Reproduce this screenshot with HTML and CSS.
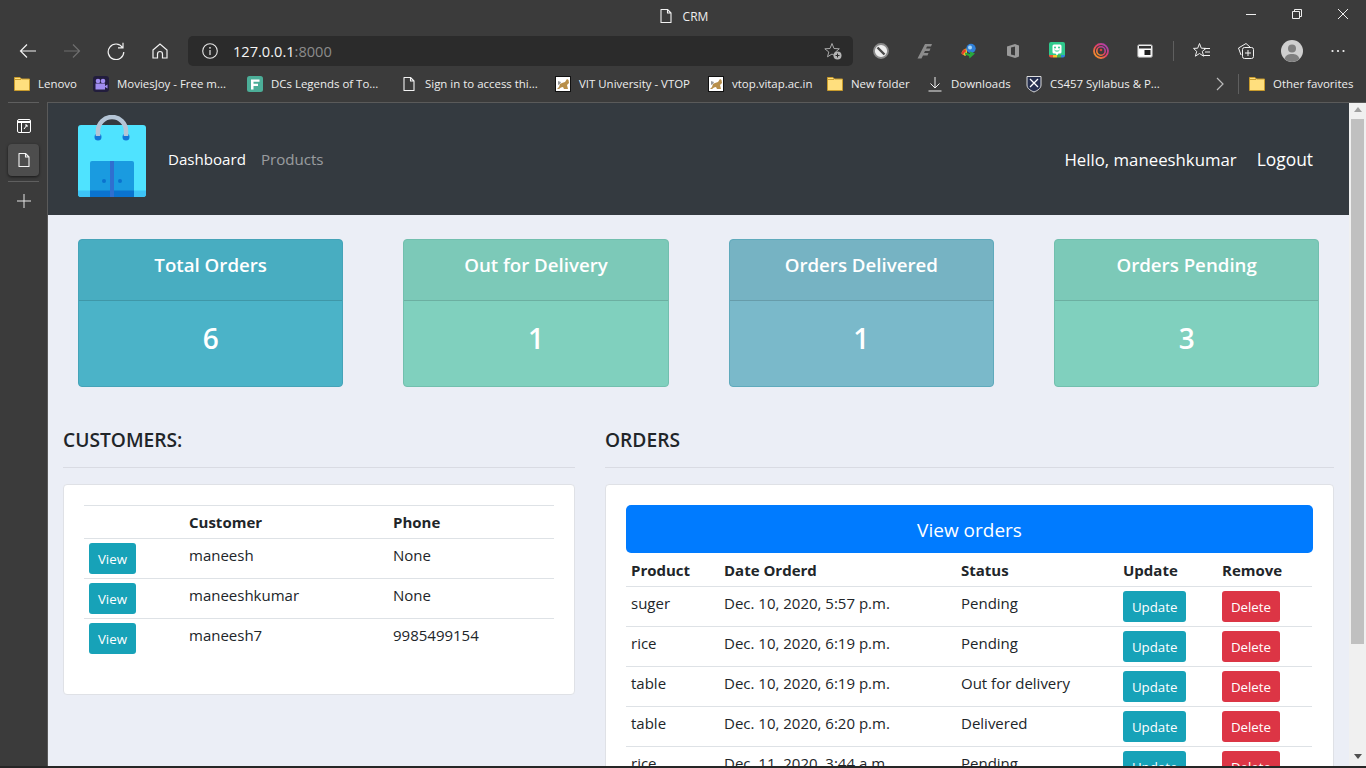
FILE: index.html
```html
<!DOCTYPE html>
<html lang="en">
<head>
    <meta charset="UTF-8" />
    <meta name="viewport" content="width=device-width, initial-scale=1.0" />
    <title>CRM</title>
    <link rel="stylesheet" href="styles.css">
</head>
<body>
    <svg class="defs" width="0" height="0">
        <symbol id="doc" viewBox="0 0 16 16"><path d="M3 1.500h6.500L13 5v9.500H3z M9.500 1.500V5H13" fill="none" stroke="currentColor" stroke-width="1.100" stroke-linejoin="round"/></symbol>
        <symbol id="folder" viewBox="0 0 16 16"><path d="M.5 1.500h5.500l1.500 1.500h8v11.500h-15z" fill="#ffdf7e" stroke="#c89b2c"/><path d="M1 3.500h6" stroke="#c89b2c"/></symbol>
        <symbol id="cat" viewBox="0 0 16 16"><rect x=".5" y=".5" width="15" height="15" fill="#fff" stroke="#111"/><path d="M2 13l2-2 1-3 2-1 3-1 2-3 1.500 1 .5 3-2 2 1 4H9L8 11l-2 .5-2 1.500z" fill="#b88f4a"/><path d="M3 5l3 1-1 2-2 1z" fill="#999"/></symbol>
        <linearGradient id="ring" x1="1" y1="0" x2="0" y2="1"><stop offset="0" stop-color="#9c3fc0"/><stop offset=".5" stop-color="#e8405f"/><stop offset="1" stop-color="#f9a81c"/></linearGradient>
    </svg>

    <div class="titlebar">
        <span></span>
        <div class="title">
            <svg class="ico16" width="16" height="16"><use href="#doc"/></svg>
            <span>CRM</span>
        </div>
        <div class="winctl">
            <svg width="46" height="16" viewBox="0 0 46 16"><path d="M18 8.500h10" stroke="#eee"/></svg>
            <svg width="46" height="16" viewBox="0 0 46 16"><path d="M18.500 5.500h7v7h-7z M20.500 5.500v-2h7v7h-2" fill="none" stroke="#eee"/></svg>
            <svg width="46" height="16" viewBox="0 0 46 16"><path d="M18 3l10 10M28 3L18 13" stroke="#eee"/></svg>
        </div>
    </div>

    <div class="toolbar">
        <div class="tbtn"><svg width="18" height="18" viewBox="0 0 18 18"><path d="M17 9H1.500M8 2.500L1.500 9 8 15.500" fill="none" stroke="#f2f2f2" stroke-width="1.200"/></svg></div>
        <div class="tbtn"><svg width="18" height="18" viewBox="0 0 18 18"><path d="M1 9h15.500M10 2.500L16.500 9 10 15.500" fill="none" stroke="#6e6e6e" stroke-width="1.200"/></svg></div>
        <div class="tbtn"><svg width="18" height="18" viewBox="0 0 18 18"><path d="M15.500 5.500A7.800 7.800 0 1 0 16.800 10M16 .8v5h-5" fill="none" stroke="#f2f2f2" stroke-width="1.200"/></svg></div>
        <div class="tbtn"><svg width="18" height="18" viewBox="0 0 18 18"><path d="M2 8L9 2l7 6v8h-4.500v-4a2.500 2.500 0 0 0-5 0v4H2z" fill="none" stroke="#f2f2f2" stroke-width="1.200"/></svg></div>
        <div class="address">
            <svg width="16" height="16" viewBox="0 0 16 16"><circle cx="8" cy="8" r="7.300" fill="none" stroke="#e6e6e6" stroke-width="1.100"/><path d="M8 7v5" stroke="#e6e6e6" stroke-width="1.200"/><circle cx="8" cy="4.800" r=".9" fill="#e6e6e6"/></svg>
            <span class="url">127.0.0.1<span class="port">:8000</span></span>
            <svg class="addfav" width="18" height="18" viewBox="0 0 18 18"><path d="M8 1.500l2 5 5.300.3-4 3.400 1 4.300-4.300-2.500-4.500 2.800 1.300-4.800L.8 6.800l5.200-.3z" fill="none" stroke="#aaa"/><circle cx="13.500" cy="13.500" r="4" fill="#b5b5b5"/><path d="M13.500 11.500v4M11.500 13.500h4" stroke="#2b2b2b"/></svg>
        </div>
        <div class="tbtn first-ext"><svg width="16" height="16" viewBox="0 0 16 16"><circle cx="8" cy="8" r="7" fill="#eeeeee" stroke="#8a8a8a" stroke-width="1.800"/><path d="M4.500 4.500l7 7" stroke="#4a4a4a" stroke-width="2.400"/></svg></div>
        <div class="tbtn"><svg width="16" height="16" viewBox="0 0 16 16"><path d="M.5 15.500L8 1h7l-1 2.500H10L9 5.500h4.500L12.500 8H8l-1 2h4.500l-1 2.500H6l-1.500 3z" fill="#8c8c8c"/></svg></div>
        <div class="tbtn"><svg width="16" height="16" viewBox="0 0 16 16"><path d="M.5 10.500C1 7 3.500 5.500 6 5.500v6L4 13z" fill="#e8c22c"/><path d="M.5 10.500C1 8 2.500 6.500 4.500 6l.5 2.500-2 1.500-1 2z" fill="#e23b2e"/><circle cx="10" cy="5.500" r="4.700" fill="#2f7fd8"/><circle cx="9" cy="4.500" r="2" fill="#a6d6f5"/><path d="M4 9.500l5 1.500V8.500l5 2-5.500 5L8 13l-4-1.500z" fill="#29a83c"/></svg></div>
        <div class="tbtn"><svg width="16" height="16" viewBox="0 0 16 16"><path d="M2 3.500L10 1l4 1.500v11L10 15l-8-2.500z" fill="#9a9a9a"/><path d="M6 4.500l4-1v9l-4-1z" fill="#3b3b3b"/></svg></div>
        <div class="tbtn"><svg width="16" height="18" viewBox="0 0 16 18"><path d="M2 0h12a2 2 0 0 1 2 2v11H0V2a2 2 0 0 1 2-2z" fill="#2fc98c"/><path d="M0 13h4v2.500H2a2 2 0 0 1-2-2z" fill="#e8503a"/><rect x="4" y="13" width="4" height="2.500" fill="#f7c325"/><rect x="8" y="13" width="4" height="2.500" fill="#48b54a"/><path d="M12 13h4v.5a2 2 0 0 1-2 2h-2z" fill="#2f86dc"/><path d="M5 2.500h6A1.500 1.500 0 0 1 12.500 4v6a1.500 1.500 0 0 1-1.500 1.500H9.500L8 13.500l-1.500-2H5A1.500 1.500 0 0 1 3.500 10V4A1.500 1.500 0 0 1 5 2.500z" fill="#fff"/><circle cx="6" cy="5.500" r="1" fill="#2fc98c"/><circle cx="10" cy="5.500" r="1" fill="#2fc98c"/><path d="M5.500 8c1 1.500 4 1.500 5 0" fill="none" stroke="#2fc98c"/></svg></div>
        <div class="tbtn"><svg width="16" height="16" viewBox="0 0 16 16"><circle cx="8" cy="8" r="7" fill="none" stroke="url(#ring)" stroke-width="1.800"/><circle cx="8" cy="8" r="4.200" fill="none" stroke="url(#ring)" stroke-width="1.600"/><circle cx="8" cy="7" r="1.300" fill="#d8433a"/></svg></div>
        <div class="tbtn"><svg width="16" height="14" viewBox="0 0 16 14"><rect x=".7" y=".7" width="14.600" height="12.600" rx="1.500" fill="#fff" stroke="#9a9a9a"/><rect x="2" y="2" width="12" height="2.500" fill="#333"/><rect x="7.500" y="6" width="6" height="5" fill="#1f1f1f"/></svg></div>
        <div class="sep"></div>
        <div class="tbtn"><svg width="18" height="18" viewBox="0 0 18 18"><path d="M6.500 1.500l1.800 4.700 4.700.2-3.700 3 1.300 4.800-4.100-2.700-4.100 2.700 1.300-4.800L.5 6.400l4.200-.2z M11 6.500h6M12 10h5M11 13.500h6" fill="none" stroke="#f2f2f2"/></svg></div>
        <div class="tbtn"><svg width="18" height="18" viewBox="0 0 18 18"><path d="M4 13L1.500 6 9 1.500l4 3.500" fill="none" stroke="#f2f2f2"/><rect x="5.500" y="5.500" width="11" height="11" rx="2" fill="#3b3b3b" stroke="#f2f2f2"/><path d="M11 8v6M8 11h6" stroke="#f2f2f2"/></svg></div>
        <div class="avatar"><svg width="22" height="22" viewBox="0 0 22 22"><circle cx="11" cy="11" r="11" fill="#cfcfcf"/><circle cx="11" cy="8.500" r="4" fill="#7f7f7f"/><path d="M3.500 19c1-4 4-5 7.500-5s6.500 1 7.500 5a11 11 0 0 1-15 0z" fill="#7f7f7f"/></svg></div>
        <div class="tbtn"><svg width="16" height="4" viewBox="0 0 16 4"><circle cx="2.500" cy="2" r="1.100" fill="#f2f2f2"/><circle cx="8" cy="2" r="1.100" fill="#f2f2f2"/><circle cx="13.500" cy="2" r="1.100" fill="#f2f2f2"/></svg></div>
    </div>

    <div class="bookmarks">
        <div class="bm w-lenovo"><svg class="ico16" width="16" height="16"><use href="#folder"/></svg><span>Lenovo</span></div>
        <div class="bm w-long"><svg width="16" height="16" viewBox="0 0 16 16"><rect width="16" height="16" rx="3" fill="#221d3d"/><circle cx="5" cy="5" r="2.300" fill="#a08cf0"/><circle cx="10" cy="5" r="2.300" fill="#a08cf0"/><path d="M2.500 7.500h9.500v6H2.500zM12 10l2.500-1.500v4L12 11z" fill="#a08cf0"/></svg><span>MoviesJoy - Free m...</span></div>
        <div class="bm w-long"><svg width="16" height="16" viewBox="0 0 16 16"><rect width="16" height="16" rx="2.500" fill="#4cae98"/><path d="M4 3.500h8.500v2.200H6.500v2H11v2.200H6.500v3.600H4z" fill="#fff"/></svg><span>DCs Legends of To...</span></div>
        <div class="bm w-long"><svg class="ico16" width="16" height="16"><use href="#doc"/></svg><span>Sign in to access thi...</span></div>
        <div class="bm w-vit"><svg class="ico16" width="16" height="16"><use href="#cat"/></svg><span>VIT University - VTOP</span></div>
        <div class="bm w-vtop"><svg class="ico16" width="16" height="16"><use href="#cat"/></svg><span>vtop.vitap.ac.in</span></div>
        <div class="bm w-folder"><svg class="ico16" width="16" height="16"><use href="#folder"/></svg><span>New folder</span></div>
        <div class="bm w-down"><svg width="16" height="16" viewBox="0 0 16 16"><path d="M8 1v11M3.500 7.500L8 12l4.500-4.500M1.500 15h13" fill="none" stroke="#eee"/></svg><span>Downloads</span></div>
        <div class="bm w-cs"><svg width="16" height="18" viewBox="0 0 16 18"><path d="M1 1.500h14V10c0 3.500-3.500 5.500-7 7-3.500-1.500-7-3.500-7-7z" fill="#27304f" stroke="#ddd"/><path d="M4 4l8 8M12 4l-8 8" stroke="#fff" stroke-width="1.300"/></svg><span>CS457 Syllabus &amp; P...</span></div>
        <svg class="more" width="10" height="14" viewBox="0 0 10 14"><path d="M2 1l6 6-6 6" fill="none" stroke="#bbb" stroke-width="1.200"/></svg>
        <div class="sep bm-sep"></div>
        <div class="bm"><svg class="ico16" width="16" height="16"><use href="#folder"/></svg><span>Other favorites</span></div>
    </div>

    <div class="window">
        <aside class="sidebar">
            <div class="side-line"></div>
            <div class="side-btn"><svg width="14" height="14" viewBox="0 0 14 14"><rect x=".5" y=".5" width="13" height="13" rx="1.500" fill="none" stroke="#fff"/><path d="M.5 3h13" stroke="#fff" stroke-width="2"/><path d="M4.500 3v10.500" stroke="#fff"/><path d="M7 10l3-4M8 6h2v2" fill="none" stroke="#fff"/></svg></div>
            <div class="side-btn active"><svg class="ico16" width="16" height="16"><use href="#doc"/></svg></div>
            <div class="side-line"></div>
            <div class="side-btn side-plus"><svg width="16" height="16" viewBox="0 0 16 16"><path d="M8 1v14M1 8h14" stroke="#e6e6e6"/></svg></div>
        </aside>

        <div class="page">
            <main class="content">
                <nav class="navbar">
                    <svg class="logo" width="68" height="82" viewBox="0 0 68 82">
                        <rect y="10" width="68" height="72" rx="3" fill="#4fe3ff"/>
                        <path d="M0 75.500h68V79a3 3 0 0 1-3 3H3a3 3 0 0 1-3-3z" fill="#3dc3f6"/>
                        <path d="M12 70h44v12H12z" fill="#0a73cf"/>
                        <path d="M12 48a2 2 0 0 1 2-2h40a2 2 0 0 1 2 2v27.500H12z" fill="#1a9be0"/>
                        <rect x="32" y="46" width="4" height="36" fill="#2f6fd0"/>
                        <circle cx="26" cy="66" r="2" fill="#0a73cf"/>
                        <circle cx="42" cy="66" r="2" fill="#0a73cf"/>
                        <circle cx="20" cy="22" r="3.500" fill="#1177d8"/>
                        <circle cx="48" cy="22" r="3.500" fill="#1177d8"/>
                        <path d="M20 21V16a14 14 0 0 1 28 0v5" fill="none" stroke="#b4c5d6" stroke-width="4.500"/>
                    </svg>
                    <a class="nav-link current" href="#">Dashboard</a>
                    <a class="nav-link" href="#">Products</a>
                    <span class="nav-right">Hello, maneeshkumar</span>
                    <a class="nav-right logout" href="#">Logout</a>
                </nav>

                <section class="stats">
                    <div class="stat stat-blue">
                        <div class="stat-head">Total Orders</div>
                        <div class="stat-body">6</div>
                    </div>
                    <div class="stat stat-green">
                        <div class="stat-head">Out for Delivery</div>
                        <div class="stat-body">1</div>
                    </div>
                    <div class="stat stat-slate">
                        <div class="stat-head">Orders Delivered</div>
                        <div class="stat-body">1</div>
                    </div>
                    <div class="stat stat-green">
                        <div class="stat-head">Orders Pending</div>
                        <div class="stat-body">3</div>
                    </div>
                </section>

                <section class="columns">
                    <div class="col-left">
                        <h5>CUSTOMERS:</h5>
                        <hr />
                        <div class="panel panel-left">
                            <table class="customers">
                                <tr><th></th><th>Customer</th><th>Phone</th></tr>
                                <tr><td><a class="btn btn-info" href="#">View</a></td><td>maneesh</td><td>None</td></tr>
                                <tr><td><a class="btn btn-info" href="#">View</a></td><td>maneeshkumar</td><td>None</td></tr>
                                <tr><td><a class="btn btn-info" href="#">View</a></td><td>maneesh7</td><td>9985499154</td></tr>
                            </table>
                        </div>
                    </div>
                    <div class="col-right">
                        <h5>ORDERS</h5>
                        <hr />
                        <div class="panel">
                            <a class="btn-view" href="#">View orders</a>
                            <table class="orders">
                                <tr><th>Product</th><th>Date Orderd</th><th>Status</th><th>Update</th><th>Remove</th></tr>
                                <tr><td>suger</td><td>Dec. 10, 2020, 5:57 p.m.</td><td>Pending</td><td><a class="btn btn-info" href="#">Update</a></td><td><a class="btn btn-danger" href="#">Delete</a></td></tr>
                                <tr><td>rice</td><td>Dec. 10, 2020, 6:19 p.m.</td><td>Pending</td><td><a class="btn btn-info" href="#">Update</a></td><td><a class="btn btn-danger" href="#">Delete</a></td></tr>
                                <tr><td>table</td><td>Dec. 10, 2020, 6:19 p.m.</td><td>Out for delivery</td><td><a class="btn btn-info" href="#">Update</a></td><td><a class="btn btn-danger" href="#">Delete</a></td></tr>
                                <tr><td>table</td><td>Dec. 10, 2020, 6:20 p.m.</td><td>Delivered</td><td><a class="btn btn-info" href="#">Update</a></td><td><a class="btn btn-danger" href="#">Delete</a></td></tr>
                                <tr><td>rice</td><td>Dec. 11, 2020, 3:44 a.m.</td><td>Pending</td><td><a class="btn btn-info" href="#">Update</a></td><td><a class="btn btn-danger" href="#">Delete</a></td></tr>
                            </table>
                        </div>
                    </div>
                </section>
            </main>
            <div class="scrollbar">
                <div class="arrow-up"></div>
                <div class="thumb"></div>
                <div class="arrow-down"></div>
            </div>
        </div>
    </div>
    <div class="bottom-edge"></div>
</body>
</html>
```

FILE: styles.css
```css
* {
    box-sizing: border-box;
}
html, body {
    height: 768px;
    overflow: hidden;
}
body {
    margin: 0;
    display: flex;
    flex-direction: column;
    background-color: #3b3b3b;
    font-family: "Open Sans", "Noto Sans", sans-serif;
    color: #212529;
}
a {
    text-decoration: none;
}
.defs {
    position: absolute;
}
.ico16 {
    color: #f2f2f2;
    flex: none;
}

/* browser chrome */
.titlebar {
    height: 34px;
    display: grid;
    grid-template-columns: 1fr auto 1fr;
    align-items: center;
    color: #eee;
    font-size: 12px;
}
.title {
    display: flex;
    align-items: center;
    gap: 9px;
    padding-bottom: 2px;
}
.winctl {
    display: flex;
    justify-content: flex-end;
    padding-bottom: 6px;
}
.toolbar {
    height: 34px;
    display: flex;
    align-items: center;
    padding-left: 6px;
}
.tbtn {
    width: 44px;
    height: 32px;
    flex: none;
    display: flex;
    align-items: center;
    justify-content: center;
}
.address {
    width: 665px;
    height: 30px;
    margin-left: 6px;
    padding: 0 11px 0 14px;
    display: flex;
    align-items: center;
    background-color: #2b2b2b;
    border-radius: 5px;
}
.url {
    margin-left: 15px;
    font-size: 14.600px;
    color: #f5f5f5;
}
.port {
    color: #8c8c8c;
}
.addfav {
    margin-left: auto;
}
.first-ext {
    margin-left: 6px;
}
.sep {
    width: 1px;
    height: 20px;
    margin: 0 6px;
    background-color: #5f5f5f;
    flex: none;
}
.avatar {
    width: 44px;
    margin: 0 2px;
    display: flex;
    justify-content: center;
    flex: none;
}
.bookmarks {
    height: 34px;
    padding: 0 0 3px 14px;
    display: flex;
    align-items: center;
    font-size: 11.450px;
    color: #eee;
}
.bm {
    display: flex;
    align-items: center;
    gap: 8px;
    white-space: nowrap;
    flex: none;
}
.w-lenovo { width: 79px; }
.w-long { width: 154px; }
.w-vit { width: 153px; }
.w-vtop { width: 119px; }
.w-folder { width: 100px; }
.w-down { width: 99px; }
.w-cs { width: 189px; }
.more {
    flex: none;
}
.bm-sep {
    margin: 0 10px 0 13px;
}

.window {
    flex: 1;
    min-height: 0;
    display: flex;
}
.sidebar {
    width: 48px;
    flex: none;
    padding: 0 8px;
    display: flex;
    flex-direction: column;
    align-items: center;
    border-right: 1px solid #5a5a5a;
}
.side-line {
    width: 31px;
    height: 1px;
    flex: none;
    background-color: #5f5f5f;
}
.side-btn {
    width: 31px;
    height: 32px;
    flex: none;
    margin-top: 7px;
    display: flex;
    align-items: center;
    justify-content: center;
}
.side-btn.active {
    margin: 2px 0 5px;
    background-color: #4d4d4d;
    border-radius: 4px;
    box-shadow: 0 1px 3px rgba(0, 0, 0, 0.6);
}
.side-btn.side-plus {
    margin-top: 3px;
}
.page {
    flex: 1;
    min-width: 0;
    display: flex;
    border-top: 1px solid #5a5a5a;
}
.content {
    flex: 1;
    min-width: 0;
    overflow: hidden;
    background-color: #ebeef6;
}
.scrollbar {
    width: 17px;
    flex: none;
    background-color: #f0f0f0;
    padding: 0 2px;
    display: flex;
    flex-direction: column;
    align-items: center;
}
.thumb {
    width: 13px;
    height: 525px;
    margin-top: 7px;
    background-color: #c0c0c0;
}
.arrow-up, .arrow-down {
    width: 0;
    height: 0;
    border-left: 4px solid transparent;
    border-right: 4px solid transparent;
}
.arrow-up {
    margin-top: 4px;
    border-bottom: 5px solid #a0a0a0;
}
.arrow-down {
    margin-top: 110px;
    border-top: 5px solid #505050;
}
.bottom-edge {
    height: 2px;
    flex: none;
    background-color: #262626;
}

/* page */
.navbar {
    height: 112px;
    display: flex;
    align-items: center;
    padding: 0 36px 0 30px;
    background-color: #343a40;
}
.logo {
    margin: 0 22px 6px 0;
    flex: none;
}
.nav-link {
    font-size: 15.100px;
    color: rgba(255, 255, 255, 0.5);
    margin-right: 15px;
}
.nav-link.current {
    color: #fff;
}
.nav-right {
    font-size: 16.800px;
    color: #fff;
}
.nav-link + .nav-right {
    margin-left: auto;
}
.logout {
    margin-left: 20px;
    font-size: 17.400px;
}

.stats {
    display: grid;
    grid-template-columns: repeat(4, 265.330px);
    column-gap: 60px;
    padding: 24px 0 0 30px;
}
.stat {
    height: 148px;
    border: 1px solid;
    border-radius: 4px;
    overflow: hidden;
    color: #fff;
    text-align: center;
    font-weight: 600;
}
.stat-head {
    height: 61px;
    padding-top: 12px;
    font-size: 18.700px;
    border-bottom: 1px solid rgba(0, 0, 0, 0.125);
    background-color: rgba(0, 0, 0, 0.03);
}
.stat-body {
    padding-top: 18px;
    font-size: 28px;
}
.stat-blue { background-color: #4bb3c8; border-color: #45a3b8; }
.stat-green { background-color: #80d0be; border-color: #72bfae; }
.stat-slate { background-color: #7ab9ca; border-color: #5faabc; }

.columns {
    display: flex;
    gap: 30px;
    padding: 39px 15px 0;
    align-items: flex-start;
}
.col-left {
    width: 512px;
    flex: none;
}
.col-right {
    flex: 1;
    min-width: 0;
}
h5 {
    margin: 0;
    height: 27px;
    font-size: 19.200px;
    font-weight: 600;
    line-height: 28px;
}
hr {
    margin: 14px 0 16px;
    border: 0;
    border-top: 1px solid #d9dbe3;
}
.panel {
    background-color: #fff;
    border: 1px solid #dfe1e6;
    border-radius: 4px;
    padding: 20px;
    height: 400px;
}
.panel-left {
    height: 211px;
}
table {
    border-collapse: collapse;
    table-layout: fixed;
    font-size: 15px;
}
th, td {
    padding: 4px 5px;
    text-align: left;
    vertical-align: top;
    border-top: 1px solid #dee2e6;
}
th {
    font-weight: 700;
    height: 33px;
    padding-top: 6px;
}
td {
    height: 40px;
    line-height: 24px;
}
.customers {
    width: 470px;
}
.customers th:nth-child(1) { width: 100px; }
.customers th:nth-child(2) { width: 204px; }
.orders {
    width: 686px;
}
.orders th {
    border-top: 0;
    padding-top: 7px;
}
.orders th:nth-child(1) { width: 93px; }
.orders th:nth-child(2) { width: 237px; }
.orders th:nth-child(3) { width: 162px; }
.orders th:nth-child(4) { width: 99px; }
.btn {
    display: inline-block;
    height: 31px;
    padding: 0 8.900px;
    border-radius: 3px;
    font-size: 13.300px;
    line-height: 33px;
    color: #fff;
    vertical-align: top;
}
.btn-info {
    background-color: #17a2b8;
}
.btn-danger {
    background-color: #dc3545;
}
.btn-view {
    display: block;
    width: 687px;
    height: 48px;
    background-color: #007bff;
    border-radius: 5px;
    color: #fff;
    font-size: 19px;
    line-height: 50px;
    text-align: center;
}
```
